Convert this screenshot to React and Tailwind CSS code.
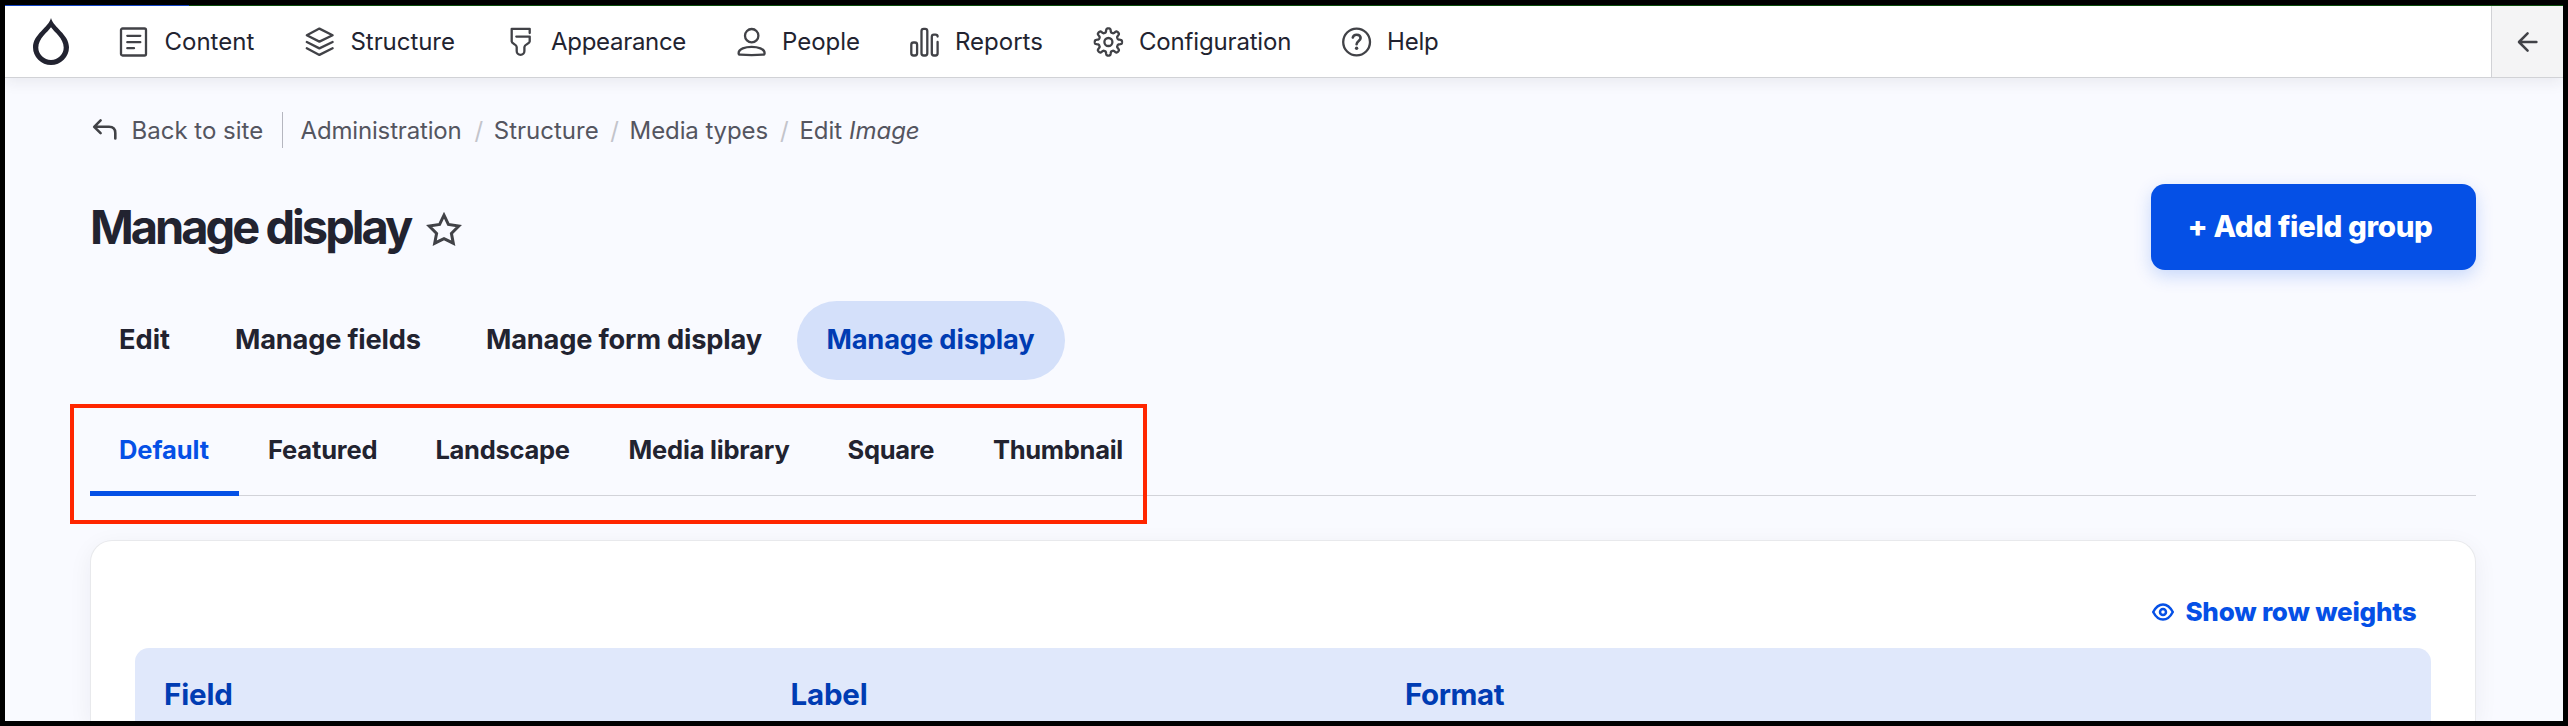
const gearPath = (() => {
  const points = [];
  for (let i = 0; i < 240; i++) {
    const a = (i / 240) * Math.PI * 2;
    const r = 11.7 + 1.9 * Math.tanh(2.2 * Math.cos(8 * a)) / Math.tanh(2.2);
    points.push(`${(16 + r * Math.sin(a)).toFixed(2)} ${(16 - r * Math.cos(a)).toFixed(2)}`);
  }
  return `M${points.join("L")}Z`;
})();

function Icon({ children, className = "size-8", box = "0 0 32 32", width = 2.3 }) {
  return (
    <svg
      className={`shrink-0 ${className}`}
      viewBox={box}
      fill="none"
      stroke="currentColor"
      strokeWidth={width}
      strokeLinecap="round"
      strokeLinejoin="round"
      aria-hidden="true"
    >
      {children}
    </svg>
  );
}

const navItems = [
  {
    label: "Content",
    item: "w-[186px]",
    text: "",
    icon: (
      <>
        <rect x="3" y="2.5" width="25" height="27" rx="1.5" />
        <path d="M9.3 9.8H22.3M9.3 16.2H22.3M9.3 22.2H16" />
      </>
    ),
  },
  {
    label: "Structure",
    item: "w-[200.5px]",
    text: "tracking-[-0.06px]",
    icon: (
      <path d="M15.4 2.6L2.8 9.2L15.4 15.6L28.6 9.2ZM2.8 16L15.4 22.4L28.6 16M2.8 22.3L15.4 28.9L28.6 22.3" />
    ),
  },
  {
    label: "Appearance",
    item: "w-[231px]",
    text: "tracking-[-0.3px]",
    icon: (
      <path d="M24.7 7V2.8H6.7V15.5C6.7 18 11.7 18 11.7 21V25A3.8 3.8 0 0 0 19.4 25V21C19.4 18 24.7 18 24.7 15.5V10.6H11.3" />
    ),
  },
  {
    label: "People",
    item: "w-[173px]",
    text: "",
    icon: (
      <>
        <circle cx="15.7" cy="9.7" r="6.7" />
        <path d="M2.6 27.2C2.6 22.8 9.4 20.9 15.6 20.9S28.6 22.8 28.6 27.2C28.6 28.4 28.2 28.6 26.9 28.7C19.4 29.2 11.8 29.2 4.3 28.7C3 28.6 2.6 28.4 2.6 27.2Z" />
      </>
    ),
  },
  {
    label: "Reports",
    item: "w-[184px]",
    text: "",
    icon: (
      <>
        <rect x="2.3" y="16.5" width="5.8" height="13" rx="2.2" />
        <rect x="12.5" y="2.9" width="5.8" height="26.6" rx="2.2" />
        <path d="M28.6 10.6C28.6 9.2 27.8 8.6 26.5 8.6H24.9C23.6 8.6 22.8 9.3 22.8 10.8V27.3C22.8 28.8 23.6 29.5 24.9 29.5H26.5C27.8 29.5 28.6 28.8 28.6 27.3V16" />
      </>
    ),
  },
  {
    label: "Configuration",
    item: "w-[248px]",
    text: "tracking-[-0.17px]",
    icon: (
      <g transform="translate(-0.6 0)">
        <path d={gearPath} />
        <circle cx="16" cy="16" r="4" />
      </g>
    ),
  },
  {
    label: "Help",
    item: "",
    text: "tracking-[-0.2px]",
    icon: (
      <g transform="translate(-0.4 0)">
        <circle cx="16" cy="16" r="13.4" />
        <path d="M12.2 11.6C12.6 9.6 14.1 8.7 16 8.7C18.3 8.7 20 10 20 12.1C20 15 16 15 16 18.3" strokeWidth="2.6" />
        <circle cx="16" cy="22.2" r="1.7" fill="currentColor" stroke="none" />
      </g>
    ),
  },
];

const viewModes = [
  { label: "Featured", cls: "w-[167.5px] tracking-[-0.17px]" },
  { label: "Landscape", cls: "w-[193px] tracking-[-0.3px]" },
  { label: "Media library", cls: "w-[219px] tracking-[-0.2px]" },
  { label: "Square", cls: "w-[145.5px] tracking-[-0.28px]" },
  { label: "Thumbnail", cls: "tracking-[-0.3px]" },
];

function Toolbar() {
  return (
    <header className="flex h-[72px] items-stretch border-b border-[#d1d2d6] bg-white text-2xl text-[#222330] shadow-[0_4px_14px_rgba(34,35,48,0.08)]">
      <a className="flex w-[113px] shrink-0 items-center pl-[27.5px]">
        <svg className="h-[47px] w-9" viewBox="0 0 36 47" aria-hidden="true">
          <path
            fill="#222330"
            fillRule="evenodd"
            d="M18 0C20.5 9.5 36 16.5 36 29.2A18 17.8 0 0 1 0 29.2C0 16.5 15.5 9.5 18 0ZM18 9.3C14.8 14 5.3 20.5 5.3 29.6A12.7 12.4 0 0 0 30.7 29.6C30.7 20.5 21.2 14 18 9.3Z"
          />
        </svg>
      </a>
      <nav className="flex grow">
        {navItems.map(({ label, item, text, icon }) => (
          <a key={label} className={`flex shrink-0 items-center gap-[14.5px] ${item}`}>
            <span className="text-[#414247]">
              <Icon>{icon}</Icon>
            </span>
            <span className={text}>{label}</span>
          </a>
        ))}
      </nav>
      <button className="flex w-18 items-center justify-center border-l border-[#d1d2d6] bg-[#f4f4f5] text-[#414247]">
        <Icon className="size-6" box="0 0 24 24" width={2.5}>
          <path d="M11.6 3.4L3 12L11.6 20.6M3.2 12H20.4" />
        </Icon>
      </button>
    </header>
  );
}

function Slash() {
  return <span className="w-[19.3px] shrink-0 text-[#c3c4cb]">/</span>;
}

function Breadcrumb() {
  return (
    <nav className="flex h-9 items-center text-2xl whitespace-nowrap text-[#545560]">
      <a className="flex w-[193px] shrink-0 items-center gap-[12.5px] self-stretch border-r border-[#b5b6bf] pl-0.5">
        <span className="text-[#414247]">
          <Icon className="h-6 w-[27px]" box="0 0 27 24" width={2.6}>
            <path d="M8.6 2.4L2.2 8.8L8.6 15.2M2.6 8.8H17C21 8.8 23.3 10.5 23.3 15V20.5" />
          </Icon>
        </span>
        <span className="pt-0.5">Back to site</span>
      </a>
      <div className="ml-[17.5px] flex items-center pt-0.5">
        <span className="w-[174px] tracking-[-0.16px]">Administration</span>
        <Slash />
        <span className="w-[116.5px]">Structure</span>
        <Slash />
        <span className="w-[150.5px] tracking-[-0.1px]">Media types</span>
        <Slash />
        <span>
          Edit <em>Image</em>
        </span>
      </div>
    </nav>
  );
}

export default function App() {
  return (
    <div className="relative flex h-[726px] w-[2568px] flex-col overflow-hidden border-5 border-black bg-[#f9faff] font-['Inter',sans-serif]">
      <div className="flex h-px shrink-0 bg-[#0d4f0d]">
        <div className="w-46 bg-[#1347c8]" />
      </div>
      <Toolbar />

      <main className="flex grow flex-col pt-[34px] pr-[87px] pl-[85px] text-[#222330]">
        <Breadcrumb />

        <div className="mt-9 flex h-[86px] shrink-0 items-center justify-between">
          <div className="flex items-center">
            <h1 className="text-[47px] font-bold tracking-[-3px] whitespace-nowrap">Manage display</h1>
            <span className="mt-[3px] ml-3.5 text-[#414247]">
              <Icon className="size-10" box="0 0 40 40" width={3}>
                <path
                  strokeLinejoin="miter"
                  d="M20 6.2L24.4 15.4L34.8 17L27.4 24.4L29.3 34.2L20 29.6L10.7 34.2L12.6 24.4L5.2 17L15.6 15.4Z"
                />
              </Icon>
            </span>
          </div>
          <button className="h-[86px] w-[325px] rounded-[14px] bg-[#0550e6] pr-[7px] pb-px text-[29.5px] font-extrabold tracking-[-0.34px] whitespace-nowrap text-white shadow-[0_6px_18px_rgba(5,80,230,0.2)]">
            + Add field group
          </button>
        </div>

        <nav className="mt-[31px] flex h-[79px] shrink-0 items-center text-[27.25px] font-bold whitespace-nowrap">
          <a className="w-[145px] pl-[29px]">Edit</a>
          <a className="w-[251px] tracking-[-0.2px]">Manage fields</a>
          <a className="w-[311px] tracking-[-0.2px]">Manage form display</a>
          <a className="flex h-[79px] w-67 items-center justify-center rounded-full bg-[#d4e0fa] pr-px tracking-[-0.13px] text-[#003cb3]">
            Manage display
          </a>
        </nav>

        <nav className="mt-[22px] flex h-[94px] shrink-0 border-b border-[#d2d3d9] text-[25.5px] font-bold whitespace-nowrap">
          <a className="mr-[29px] -mb-px flex w-[149px] items-center justify-center border-b-5 border-[#0550e6] pt-2 pr-px tracking-[-0.08px] text-[#0550e6]">
            Default
          </a>
          {viewModes.map(({ label, cls }) => (
            <a key={label} className={`flex items-center pt-1 ${cls}`}>
              {label}
            </a>
          ))}
        </nav>

        <section className="mt-11 flex grow flex-col rounded-t-[22px] border border-b-0 border-[#e8e9ec] bg-white px-11 pt-[34px] shadow-[0_6px_24px_rgba(34,35,48,0.06)]">
          <a className="flex h-[73px] shrink-0 items-center justify-end gap-2.5 pr-[14.5px] text-[26px] font-extrabold tracking-[-0.22px] text-[#0550e6]">
            <Icon className="h-[22px] w-6" box="0 0 24 22" width={2.5}>
              <path d="M2.2 11C5 5.6 8.2 3.4 12 3.4S19 5.6 21.8 11C19 16.4 15.8 18.6 12 18.6S5 16.4 2.2 11Z" />
              <circle cx="12" cy="11" r="3" />
            </Icon>
            Show row weights
          </a>
          <div className="grid grow grid-cols-[626.5px_614.5px_1fr] items-start rounded-t-[14px] bg-[#e0e8fb] pt-7 pl-[29px] text-[29.5px] leading-9 font-bold text-[#003cb3]">
            <span className="tracking-[-0.15px]">Field</span>
            <span className="tracking-[-0.2px]">Label</span>
            <span className="tracking-[-0.4px]">Format</span>
          </div>
        </section>
      </main>

      <div className="pointer-events-none absolute top-[399px] left-[65px] h-[120px] w-[1077px] border-4 border-[#ff2600]" />
    </div>
  );
}
